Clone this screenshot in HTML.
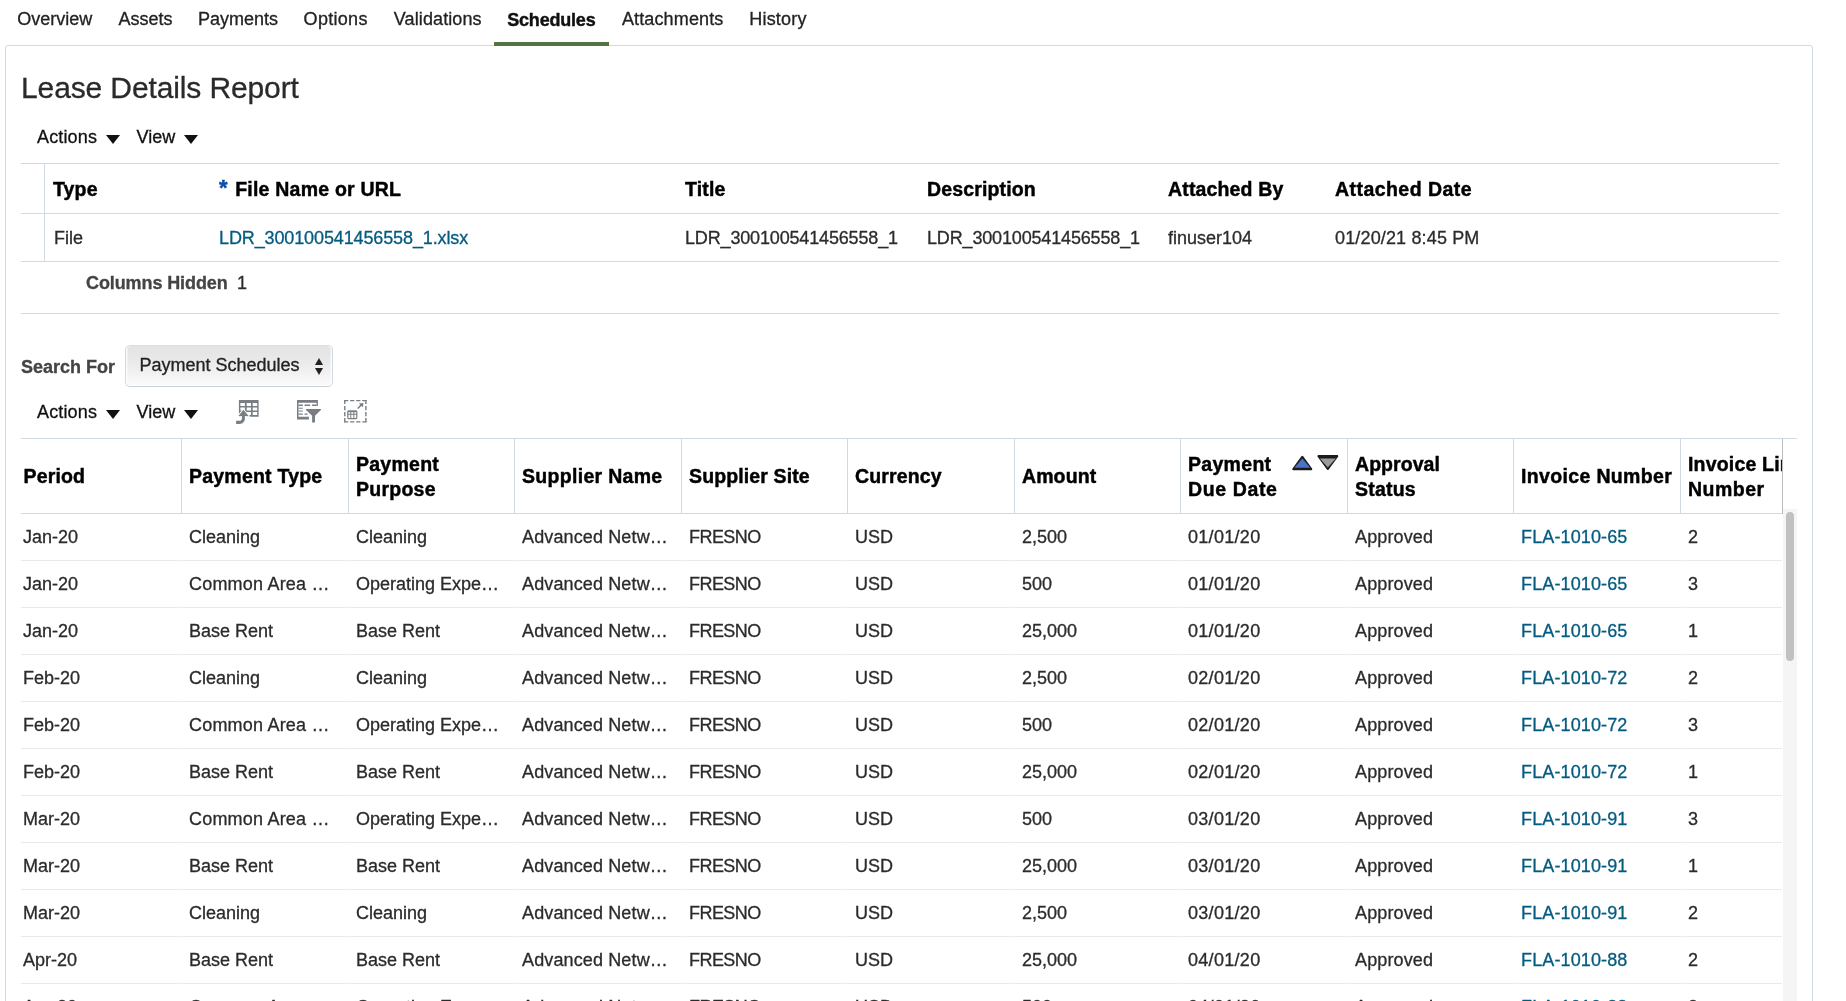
<!DOCTYPE html>
<html lang="en">
<head>
<meta charset="utf-8">
<title>Lease Details Report</title>
<style>
html,body{margin:0;padding:0;background:#fff;}
body{will-change:transform;width:1846px;height:1001px;overflow:hidden;position:relative;font-family:"Liberation Sans",sans-serif;font-size:18px;color:#2b2b2b;-webkit-text-stroke:0.3px;}
a{color:#045b80;text-decoration:none;}
.tabs{position:absolute;left:0;top:0;height:46px;width:900px;white-space:nowrap;z-index:2;}
.tab{position:absolute;top:0;height:42px;line-height:38px;color:#222;white-space:nowrap;}
.tab.sel{font-weight:bold;color:#111;line-height:40px;-webkit-text-stroke:0.4px;}
.selbar{position:absolute;left:494px;top:42px;width:115px;height:4px;background:#537544;}
.panel{position:absolute;left:5px;top:45px;width:1806px;height:980px;border:1px solid #d1dae3;border-radius:3px;box-sizing:content-box;}
.abs{position:absolute;white-space:nowrap;}
h1.title{position:absolute;left:21px;top:69.5px;margin:0;font-size:30px;font-weight:normal;color:#2a2a2a;line-height:36px;white-space:nowrap;letter-spacing:-.12px;}
.menu{position:absolute;font-size:18px;color:#111;line-height:22px;white-space:nowrap;}
.tri{position:absolute;width:0;height:0;border-left:7px solid transparent;border-right:7px solid transparent;border-top:9.5px solid #111;}
.hline{position:absolute;height:1px;background:#d1dae3;}
.vl{position:absolute;width:1px;background:#d1dae3;}
.h1t{position:absolute;font-weight:bold;font-size:19.5px;color:#000;line-height:25px;white-space:nowrap;letter-spacing:.15px;-webkit-text-stroke:0.45px;}
.c1t{position:absolute;font-size:18px;color:#2b2b2b;line-height:22px;white-space:nowrap;}
.lbl{position:absolute;font-weight:bold;font-size:18px;color:#444;line-height:22px;white-space:nowrap;}
.sel1{position:absolute;left:125px;top:345px;width:208px;height:42px;box-sizing:border-box;border:1px solid #d3dae0;border-top-color:#d8dfe5;border-bottom-color:#c9d1d8;border-radius:5px;background:linear-gradient(#e3e3e3,#ebebeb 45%,#fbfbfb);box-shadow:inset 1.5px 0 0 rgba(255,255,255,.75),inset -1.5px 0 0 rgba(255,255,255,.75),inset 0 -1px 0 rgba(255,255,255,.9);}
.sel1 span{position:absolute;left:13.5px;top:7.5px;line-height:22px;font-size:18px;color:#222;white-space:nowrap;}
.sel1 i{position:absolute;left:188.5px;width:0;height:0;border-left:4.5px solid transparent;border-right:4.5px solid transparent;}
.sel1 i.up{top:11.5px;border-bottom:7px solid #222;}
.sel1 i.dn{top:22.3px;border-top:7px solid #222;}
.t2{position:absolute;left:21px;top:438px;width:1776px;height:600px;}
.t2head{position:absolute;left:0;top:0;width:1761px;height:74px;border-top:1px solid #d1dae3;border-bottom:1px solid #d1dae3;box-sizing:content-box;}
.t2:before{content:"";position:absolute;left:0;top:0;width:1776px;height:1px;background:#d1dae3;}
.th{position:absolute;top:0;height:74px;box-sizing:border-box;border-left:1px solid #d1dae3;display:flex;align-items:center;overflow:hidden;}
.th.first{border-left:none;}
.thl{display:block;padding-left:7px;font-weight:bold;font-size:19.5px;line-height:25px;color:#000;white-space:nowrap;letter-spacing:.15px;-webkit-text-stroke:0.45px;}
.th.first .thl{padding-left:2.5px;}
.sort{position:absolute;left:107px;top:13px;}
.t2body{position:absolute;left:0;top:76px;width:1761px;height:600px;}
.tr{position:absolute;left:0;width:1761px;height:47px;}
.td{position:absolute;top:0;height:47px;line-height:46px;box-sizing:border-box;padding-left:7px;border-left:1px solid #fff;border-bottom:1px solid #eaeaea;white-space:nowrap;overflow:hidden;color:#2b2b2b;}
.td.first{padding-left:2px;border-left:none;}
.vline{position:absolute;left:1761px;top:1px;width:1px;height:75px;background:#bdbdbd;}
.sbtrack{position:absolute;left:1762px;top:71px;width:14px;height:600px;background:#f5f5f5;}
.sbthumb{position:absolute;left:3px;top:3px;width:8px;height:149px;border-radius:4px;background:#c1c1c1;}
.ico{position:absolute;}
.ls3{letter-spacing:.3px;}
.ls1{letter-spacing:.13px;}
.thl.two{position:relative;top:1px;}
</style>
</head>
<body>
<div class="tabs"><span class="tab" style="left:17.2px;letter-spacing:0px">Overview</span><span class="tab" style="left:118.4px;letter-spacing:0px">Assets</span><span class="tab" style="left:197.95px;letter-spacing:0px">Payments</span><span class="tab" style="left:303.6px;letter-spacing:0.3px">Options</span><span class="tab" style="left:393.85px;letter-spacing:0.1px">Validations</span><span class="tab sel" style="left:507.2px;letter-spacing:-0.19px">Schedules</span><span class="tab" style="left:621.9px;letter-spacing:0.14px">Attachments</span><span class="tab" style="left:749.3px;letter-spacing:0.18px">History</span><i class="selbar"></i></div>
<div class="panel"></div>
<div class="page">
<h1 class="title">Lease Details Report</h1>
<div class="menu" style="left:37px;top:126px;letter-spacing:.15px">Actions</div><div class="tri" style="left:106px;top:134.5px"></div>
<div class="menu" style="left:136.5px;top:126px">View</div><div class="tri" style="left:184px;top:134.5px"></div>
<div class="hline" style="left:21px;top:163px;width:1758px"></div>
<div class="hline" style="left:21px;top:213px;width:1758px"></div>
<div class="hline" style="left:21px;top:261px;width:1758px"></div>
<div class="vl" style="left:44px;top:163px;height:98px"></div>
<div class="h1t" style="left:53px;top:177px">Type</div>
<div class="h1t" style="left:219px;top:177px;letter-spacing:.22px"><span style="color:#0a4fa8;position:relative;top:-1px;font-size:22px;line-height:0;letter-spacing:0;margin-right:2px">*</span> File Name or URL</div>
<div class="h1t" style="left:685px;top:177px">Title</div>
<div class="h1t" style="left:927px;top:177px">Description</div>
<div class="h1t" style="left:1168px;top:177px">Attached By</div>
<div class="h1t" style="left:1335px;top:177px;letter-spacing:.45px">Attached Date</div>
<div class="c1t" style="left:54px;top:227px">File</div>
<div class="c1t" style="left:219px;top:227px"><a style="letter-spacing:-.12px">LDR_300100541456558_1.xlsx</a></div>
<div class="c1t" style="left:685px;top:227px;letter-spacing:-.16px">LDR_300100541456558_1</div>
<div class="c1t" style="left:927px;top:227px;letter-spacing:-.16px">LDR_300100541456558_1</div>
<div class="c1t" style="left:1168px;top:227px">finuser104</div>
<div class="c1t" style="left:1335px;top:227px;letter-spacing:.15px">01/20/21 8:45 PM</div>
<div class="lbl" style="left:86px;top:272px;letter-spacing:-.1px">Columns Hidden</div>
<div class="c1t" style="left:237px;top:272px">1</div>
<div class="hline" style="left:21px;top:313px;width:1758px"></div>
<div class="lbl" style="left:21px;top:356px">Search For</div>
<div class="sel1"><span>Payment Schedules</span><i class="up"></i><i class="dn"></i></div>
<div class="menu" style="left:37px;top:401px;letter-spacing:.15px">Actions</div><div class="tri" style="left:106px;top:409.5px"></div>
<div class="menu" style="left:136.5px;top:401px">View</div><div class="tri" style="left:184px;top:409.5px"></div>
<svg class="ico" style="left:234px;top:396px" width="28" height="30" viewBox="0 0 28 30" aria-hidden="true">
 <path fill="#787e83" fill-rule="evenodd" d="M4.9 3.9H24.6V20.7H4.9Z M6.4 7H10.9V9.9H6.4Z M12.7 7H17V9.9H12.7Z M18.7 7H23.2V9.9H18.7Z M6.4 11.5H10.9V14.4H6.4Z M12.7 11.5H17V14.4H12.7Z M18.7 11.5H23.2V14.4H18.7Z M6.4 16H10.9V18.9H6.4Z M12.7 16H17V18.9H12.7Z M18.7 16H23.2V18.9H18.7Z"/>
 <path d="M9.5 13.7L14.6 19.9H10.9V22.6C10.9 25.8 8.8 27.9 5.6 27.9H2.1V24.8H5.3C6.9 24.8 7.9 23.8 7.9 22.2V19.9H4.4Z" fill="#787e83" stroke="#fff" stroke-width="1.8" paint-order="stroke" stroke-linejoin="miter"/>
</svg>
<svg class="ico" style="left:295px;top:396px" width="28" height="30" viewBox="0 0 28 30" aria-hidden="true">
 <path fill="#787e83" d="M2 3.9H22.9V9.9H21.6V6.8H3.5V20.7H13.9V23.5H2Z"/>
 <path fill="#787e83" d="M3.5 8.6H7.8V9.9H3.5Z M9.6 8.6H15.1V9.9H9.6Z M17.1 8.6H21.6V9.9H17.1Z M3.5 11.7H7.8V12.8H3.5Z M3.5 14.5H7.8V15.6H3.5Z M3.5 17.6H7.8V18.7H3.5Z M9.6 17.6H12.6V18.7H9.6Z"/>
 <path fill="#787e83" d="M11 12.9H25.9V14L20 19.8V26.4H17.1V19.8L11 14Z"/>
</svg>
<svg class="ico" style="left:343px;top:396px" width="26" height="30" viewBox="0 0 26 30" aria-hidden="true">
 <g fill="none" stroke="#787e83" stroke-width="1.4" stroke-dasharray="4.2 1.85">
  <path d="M1.1 4.6H23.6"/><path d="M1.1 25.9H23.6"/><path d="M1.8 3.9V26.6"/><path d="M22.9 3.9V26.6"/>
 </g>
 <rect x="4.8" y="15" width="9" height="7.6" rx="0.8" fill="none" stroke="#787e83" stroke-width="1.2"/>
 <path d="M4.8 15.4H13.8" stroke="#787e83" stroke-width="1.6" fill="none"/>
 <path d="M7.75 15V22.6M10.85 15V22.6M4.8 18.3H13.8" stroke="#787e83" stroke-width="1" fill="none"/>
 <path d="M14.7 12.5L18.6 8.6" stroke="#787e83" stroke-width="1.5" fill="none"/>
 <path d="M20.4 6.9L15.9 7.4L19.9 11.3Z" fill="#787e83"/>
</svg>
<div class="t2">
 <div class="t2head">
  <div class="th first" style="left:0px;width:160px"><span class="thl"><span style="letter-spacing:0.15px">Period</span></span></div>
  <div class="th" style="left:160px;width:167px"><span class="thl"><span style="letter-spacing:0.22px">Payment Type</span></span></div>
  <div class="th" style="left:327px;width:166px"><span class="thl two"><span style="letter-spacing:0.25px">Payment</span><br><span style="letter-spacing:0.25px">Purpose</span></span></div>
  <div class="th" style="left:493px;width:167px"><span class="thl"><span style="letter-spacing:0.3px">Supplier Name</span></span></div>
  <div class="th" style="left:660px;width:166px"><span class="thl"><span style="letter-spacing:0.12px">Supplier Site</span></span></div>
  <div class="th" style="left:826px;width:167px"><span class="thl"><span style="letter-spacing:0.15px">Currency</span></span></div>
  <div class="th" style="left:993px;width:166px"><span class="thl"><span style="letter-spacing:0.1px">Amount</span></span></div>
  <div class="th" style="left:1159px;width:167px"><span class="thl two"><span style="letter-spacing:0.3px">Payment</span><br><span style="letter-spacing:0.62px">Due Date</span></span><svg class="sort" width="56" height="24" viewBox="0 0 56 24" aria-hidden="true"><path d="M14.3 4.9 L23.2 17.2 L5.4 17.2 Z" fill="#1b1b1d" stroke="#1b1b1d" stroke-width="2.2" stroke-linejoin="round"/><path d="M14.3 6.6 L22.2 15.7 L6.4 15.7 Z" fill="#4b73c5"/><path d="M30.5 4.2 L49.2 4.2 L39.8 16.9 Z" fill="#1b1b1d" stroke="#1b1b1d" stroke-width="2.2" stroke-linejoin="round"/><path d="M31.9 6.4 L47.8 6.4 L39.8 15.4 Z" fill="#989da1"/></svg></div>
  <div class="th" style="left:1326px;width:166px"><span class="thl two"><span style="letter-spacing:0.05px">Approval</span><br><span style="letter-spacing:0.2px">Status</span></span></div>
  <div class="th" style="left:1492px;width:167px"><span class="thl"><span style="letter-spacing:0.35px">Invoice Number</span></span></div>
  <div class="th" style="left:1659px;width:102px"><span class="thl two"><span style="letter-spacing:0.18px">Invoice Line</span><br><span style="letter-spacing:0.5px">Number</span></span></div>
 </div>
 <div class="t2body">
  <div class="tr" style="top:0px"><div class="td first" style="left:0px;width:160px">Jan-20</div><div class="td" style="left:160px;width:167px">Cleaning</div><div class="td" style="left:327px;width:166px">Cleaning</div><div class="td" style="left:493px;width:167px"><span class="ls1">Advanced Netw…</span></div><div class="td" style="left:660px;width:166px"><span style="letter-spacing:-.55px">FRESNO</span></div><div class="td" style="left:826px;width:167px">USD</div><div class="td" style="left:993px;width:166px">2,500</div><div class="td" style="left:1159px;width:167px"><span class="ls3">01/01/20</span></div><div class="td" style="left:1326px;width:166px"><span class="ls1">Approved</span></div><div class="td" style="left:1492px;width:167px"><a class="ls1">FLA-1010-65</a></div><div class="td" style="left:1659px;width:102px">2</div></div>
  <div class="tr" style="top:47px"><div class="td first" style="left:0px;width:160px">Jan-20</div><div class="td" style="left:160px;width:167px"><span style="letter-spacing:.2px">Common Area …</span></div><div class="td" style="left:327px;width:166px">Operating Expe…</div><div class="td" style="left:493px;width:167px"><span class="ls1">Advanced Netw…</span></div><div class="td" style="left:660px;width:166px"><span style="letter-spacing:-.55px">FRESNO</span></div><div class="td" style="left:826px;width:167px">USD</div><div class="td" style="left:993px;width:166px">500</div><div class="td" style="left:1159px;width:167px"><span class="ls3">01/01/20</span></div><div class="td" style="left:1326px;width:166px"><span class="ls1">Approved</span></div><div class="td" style="left:1492px;width:167px"><a class="ls1">FLA-1010-65</a></div><div class="td" style="left:1659px;width:102px">3</div></div>
  <div class="tr" style="top:94px"><div class="td first" style="left:0px;width:160px">Jan-20</div><div class="td" style="left:160px;width:167px">Base Rent</div><div class="td" style="left:327px;width:166px">Base Rent</div><div class="td" style="left:493px;width:167px"><span class="ls1">Advanced Netw…</span></div><div class="td" style="left:660px;width:166px"><span style="letter-spacing:-.55px">FRESNO</span></div><div class="td" style="left:826px;width:167px">USD</div><div class="td" style="left:993px;width:166px">25,000</div><div class="td" style="left:1159px;width:167px"><span class="ls3">01/01/20</span></div><div class="td" style="left:1326px;width:166px"><span class="ls1">Approved</span></div><div class="td" style="left:1492px;width:167px"><a class="ls1">FLA-1010-65</a></div><div class="td" style="left:1659px;width:102px">1</div></div>
  <div class="tr" style="top:141px"><div class="td first" style="left:0px;width:160px">Feb-20</div><div class="td" style="left:160px;width:167px">Cleaning</div><div class="td" style="left:327px;width:166px">Cleaning</div><div class="td" style="left:493px;width:167px"><span class="ls1">Advanced Netw…</span></div><div class="td" style="left:660px;width:166px"><span style="letter-spacing:-.55px">FRESNO</span></div><div class="td" style="left:826px;width:167px">USD</div><div class="td" style="left:993px;width:166px">2,500</div><div class="td" style="left:1159px;width:167px"><span class="ls3">02/01/20</span></div><div class="td" style="left:1326px;width:166px"><span class="ls1">Approved</span></div><div class="td" style="left:1492px;width:167px"><a class="ls1">FLA-1010-72</a></div><div class="td" style="left:1659px;width:102px">2</div></div>
  <div class="tr" style="top:188px"><div class="td first" style="left:0px;width:160px">Feb-20</div><div class="td" style="left:160px;width:167px"><span style="letter-spacing:.2px">Common Area …</span></div><div class="td" style="left:327px;width:166px">Operating Expe…</div><div class="td" style="left:493px;width:167px"><span class="ls1">Advanced Netw…</span></div><div class="td" style="left:660px;width:166px"><span style="letter-spacing:-.55px">FRESNO</span></div><div class="td" style="left:826px;width:167px">USD</div><div class="td" style="left:993px;width:166px">500</div><div class="td" style="left:1159px;width:167px"><span class="ls3">02/01/20</span></div><div class="td" style="left:1326px;width:166px"><span class="ls1">Approved</span></div><div class="td" style="left:1492px;width:167px"><a class="ls1">FLA-1010-72</a></div><div class="td" style="left:1659px;width:102px">3</div></div>
  <div class="tr" style="top:235px"><div class="td first" style="left:0px;width:160px">Feb-20</div><div class="td" style="left:160px;width:167px">Base Rent</div><div class="td" style="left:327px;width:166px">Base Rent</div><div class="td" style="left:493px;width:167px"><span class="ls1">Advanced Netw…</span></div><div class="td" style="left:660px;width:166px"><span style="letter-spacing:-.55px">FRESNO</span></div><div class="td" style="left:826px;width:167px">USD</div><div class="td" style="left:993px;width:166px">25,000</div><div class="td" style="left:1159px;width:167px"><span class="ls3">02/01/20</span></div><div class="td" style="left:1326px;width:166px"><span class="ls1">Approved</span></div><div class="td" style="left:1492px;width:167px"><a class="ls1">FLA-1010-72</a></div><div class="td" style="left:1659px;width:102px">1</div></div>
  <div class="tr" style="top:282px"><div class="td first" style="left:0px;width:160px">Mar-20</div><div class="td" style="left:160px;width:167px"><span style="letter-spacing:.2px">Common Area …</span></div><div class="td" style="left:327px;width:166px">Operating Expe…</div><div class="td" style="left:493px;width:167px"><span class="ls1">Advanced Netw…</span></div><div class="td" style="left:660px;width:166px"><span style="letter-spacing:-.55px">FRESNO</span></div><div class="td" style="left:826px;width:167px">USD</div><div class="td" style="left:993px;width:166px">500</div><div class="td" style="left:1159px;width:167px"><span class="ls3">03/01/20</span></div><div class="td" style="left:1326px;width:166px"><span class="ls1">Approved</span></div><div class="td" style="left:1492px;width:167px"><a class="ls1">FLA-1010-91</a></div><div class="td" style="left:1659px;width:102px">3</div></div>
  <div class="tr" style="top:329px"><div class="td first" style="left:0px;width:160px">Mar-20</div><div class="td" style="left:160px;width:167px">Base Rent</div><div class="td" style="left:327px;width:166px">Base Rent</div><div class="td" style="left:493px;width:167px"><span class="ls1">Advanced Netw…</span></div><div class="td" style="left:660px;width:166px"><span style="letter-spacing:-.55px">FRESNO</span></div><div class="td" style="left:826px;width:167px">USD</div><div class="td" style="left:993px;width:166px">25,000</div><div class="td" style="left:1159px;width:167px"><span class="ls3">03/01/20</span></div><div class="td" style="left:1326px;width:166px"><span class="ls1">Approved</span></div><div class="td" style="left:1492px;width:167px"><a class="ls1">FLA-1010-91</a></div><div class="td" style="left:1659px;width:102px">1</div></div>
  <div class="tr" style="top:376px"><div class="td first" style="left:0px;width:160px">Mar-20</div><div class="td" style="left:160px;width:167px">Cleaning</div><div class="td" style="left:327px;width:166px">Cleaning</div><div class="td" style="left:493px;width:167px"><span class="ls1">Advanced Netw…</span></div><div class="td" style="left:660px;width:166px"><span style="letter-spacing:-.55px">FRESNO</span></div><div class="td" style="left:826px;width:167px">USD</div><div class="td" style="left:993px;width:166px">2,500</div><div class="td" style="left:1159px;width:167px"><span class="ls3">03/01/20</span></div><div class="td" style="left:1326px;width:166px"><span class="ls1">Approved</span></div><div class="td" style="left:1492px;width:167px"><a class="ls1">FLA-1010-91</a></div><div class="td" style="left:1659px;width:102px">2</div></div>
  <div class="tr" style="top:423px"><div class="td first" style="left:0px;width:160px">Apr-20</div><div class="td" style="left:160px;width:167px">Base Rent</div><div class="td" style="left:327px;width:166px">Base Rent</div><div class="td" style="left:493px;width:167px"><span class="ls1">Advanced Netw…</span></div><div class="td" style="left:660px;width:166px"><span style="letter-spacing:-.55px">FRESNO</span></div><div class="td" style="left:826px;width:167px">USD</div><div class="td" style="left:993px;width:166px">25,000</div><div class="td" style="left:1159px;width:167px"><span class="ls3">04/01/20</span></div><div class="td" style="left:1326px;width:166px"><span class="ls1">Approved</span></div><div class="td" style="left:1492px;width:167px"><a class="ls1">FLA-1010-88</a></div><div class="td" style="left:1659px;width:102px">2</div></div>
  <div class="tr" style="top:470px"><div class="td first" style="left:0px;width:160px">Apr-20</div><div class="td" style="left:160px;width:167px"><span style="letter-spacing:.2px">Common Area …</span></div><div class="td" style="left:327px;width:166px">Operating Expe…</div><div class="td" style="left:493px;width:167px"><span class="ls1">Advanced Netw…</span></div><div class="td" style="left:660px;width:166px"><span style="letter-spacing:-.55px">FRESNO</span></div><div class="td" style="left:826px;width:167px">USD</div><div class="td" style="left:993px;width:166px">500</div><div class="td" style="left:1159px;width:167px"><span class="ls3">04/01/20</span></div><div class="td" style="left:1326px;width:166px"><span class="ls1">Approved</span></div><div class="td" style="left:1492px;width:167px"><a class="ls1">FLA-1010-88</a></div><div class="td" style="left:1659px;width:102px">3</div></div>
 </div>
 <div class="vline"></div>
 <div class="sbtrack"><div class="sbthumb"></div></div>
</div>
</div>
</body>
</html>
